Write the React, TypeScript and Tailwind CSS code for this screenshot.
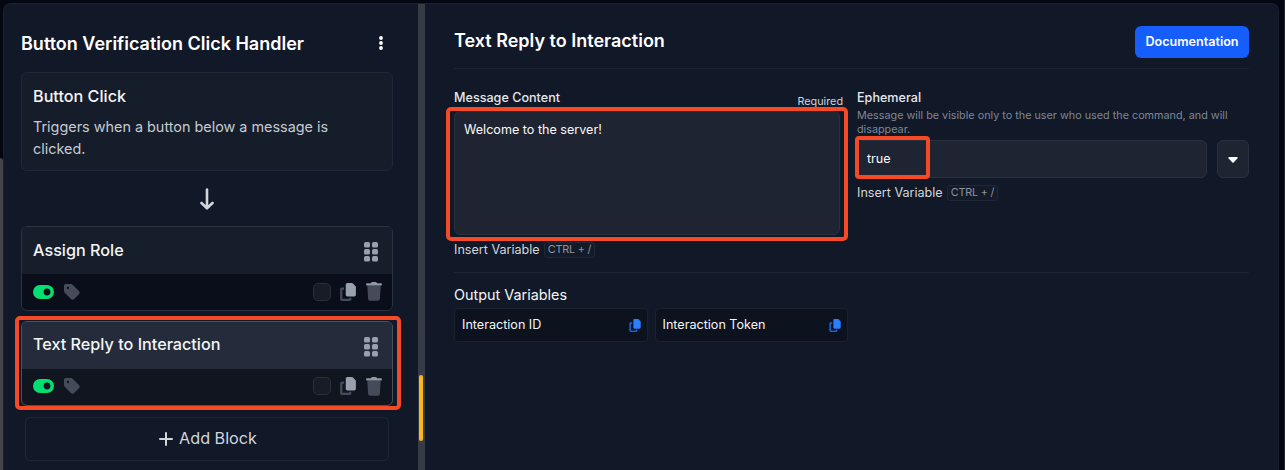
import type { ReactNode } from "react";

function CopyIcon({ className, back, front }: { className: string; back: string; front: string }) {
  return (
    <svg viewBox="0 0 448 512" className={className}>
      <path
        className={back}
        d="M0 176c0-27 21-48 48-48h64v64H64v256h192v-32h64v48c0 27-21 48-48 48H48c-27 0-48-21-48-48z"
      />
      <path
        className={front}
        d="M160 48c0-27 21-48 48-48h124c13 0 25 5 34 14l68 68c9 9 14 21 14 34v220c0 27-21 48-48 48H208c-27 0-48-21-48-48z"
      />
    </svg>
  );
}

function ToggleIcon() {
  return (
    <svg viewBox="0 0 21 14" className="h-[14px] w-[21px]">
      <path
        fillRule="evenodd"
        className="fill-[#05df72]"
        d="M7 0h7a7 7 0 0 1 0 14H7A7 7 0 0 1 7 0zM14 3.6a3.4 3.4 0 1 0 0 6.8a3.4 3.4 0 0 0 0-6.8z"
      />
    </svg>
  );
}

function TagIcon() {
  return (
    <svg viewBox="0 0 448 448" className="ml-2.5 size-4">
      <path
        fillRule="evenodd"
        className="fill-[#454b58]"
        d="M0 48v150c0 17 7 33 19 45l176 176c25 25 66 25 91 0l133-133c25-25 25-66 0-91L243 19C231 7 215 0 198 0H48C21 0 0 21 0 48zm112 32a32 32 0 1 1 0 64a32 32 0 1 1 0-64z"
      />
    </svg>
  );
}

function TrashIcon() {
  return (
    <svg viewBox="0 0 16 19" className="ml-[10px] h-[19px] w-4">
      <path className="fill-[#454b58]" d="M1.300 3.500h13.400l-.8 13.400a2 2 0 0 1-2 1.800H4.100a2 2 0 0 1-2-1.800z" />
      <path
        className="fill-[#8f98a5]"
        d="M5.300.6A1.200 1.200 0 0 1 6.400 0h3.200c.5 0 .9.200 1.100.6l.3.700h3.900a1.100 1.100 0 0 1 0 2.200H1.100a1.100 1.100 0 0 1 0-2.200H5z"
      />
    </svg>
  );
}

function GripIcon() {
  return (
    <svg viewBox="0 0 14 20" className="h-5 w-[14px] fill-[#99a1af]">
      {[0, 7, 14].map((y) =>
        [0, 8].map((x) => <rect key={`${x}-${y}`} x={x} y={y} width="6" height="5.600" rx="1.700" />),
      )}
    </svg>
  );
}

function Block({ title, selected }: { title: string; selected?: boolean }) {
  return (
    <div
      className={`flex h-[85px] flex-col overflow-hidden rounded-md border ${
        selected ? "border-[#4a5260] bg-[#101520]" : "border-[#2b3340] bg-[#090e1a]"
      }`}
    >
      <div
        className={`flex h-[47px] items-center justify-between pr-[14px] pb-px pl-[11px] ${
          selected ? "bg-[#242c3b]" : "bg-[#161e2b]"
        }`}
      >
        <span className="text-[16.2px] font-medium text-[#f3f4f6]">{title}</span>
        <span className="mt-1">
          <GripIcon />
        </span>
      </div>
      <div className="flex flex-1 items-center pr-[10px] pb-px pl-[10.500px]">
        <ToggleIcon />
        <TagIcon />
        <span className="ml-auto size-[18px] rounded-[5px] border border-[#2a303b] bg-[#171c27]" />
        <CopyIcon className="ml-[9px] h-[18px] w-4" back="fill-[#454b58]" front="fill-[#99a1af]" />
        <TrashIcon />
      </div>
    </div>
  );
}

function InsertVariable() {
  return (
    <div className="flex h-4 items-center text-[12.6px] text-[#d1d5dc]">
      Insert Variable
      <span className="ml-1 flex h-4 items-center rounded-[3px] border border-[#1f2836] bg-[#131b28] px-[3px] text-[10.8px] tracking-[-0.2px] text-[#8b93a1]">
        CTRL + /
      </span>
    </div>
  );
}

function OutputVariable({ children }: { children: ReactNode }) {
  return (
    <div className="flex h-[34px] w-[193.500px] items-center justify-between rounded-[4px] border border-[#1a2230] bg-[#0c121e] pr-1.5 pl-[7px] text-[12.6px] text-[#f3f4f6]">
      <span className="pt-px">{children}</span>
      <CopyIcon className="h-[13px] w-3" back="fill-[#1d5fd0]" front="fill-[#2b7fff]" />
    </div>
  );
}

function Sidebar() {
  return (
    <aside className="flex w-[414px] shrink-0 flex-col pr-[25px] pl-[17px]">
      <header className="mt-[27px] flex h-6 items-center justify-between pr-[10px]">
        <h1 className="text-[18px] font-semibold text-white">Button Verification Click Handler</h1>
        <svg viewBox="0 0 4 14" className="mb-px h-[14px] w-1 fill-white">
          <circle cx="2" cy="2" r="1.900" />
          <circle cx="2" cy="7" r="1.900" />
          <circle cx="2" cy="12" r="1.900" />
        </svg>
      </header>
      <section className="mt-[17px] h-[99px] rounded-md border border-[#1e2836] bg-[#151d2a] px-[11px] pt-[11px]">
        <h2 className="text-[16.2px] leading-6 font-medium text-[#f3f4f6]">Button Click</h2>
        <p className="mt-2 text-[14.4px] leading-[22px] text-[#c5cad1]">
          Triggers when a button below a message is clicked.
        </p>
      </section>
      <div className="flex h-[55px] items-center justify-center">
        <svg
          viewBox="0 0 14 22"
          className="h-[22px] w-[14px] fill-none stroke-[#d1d5dc] stroke-[2.600]"
          strokeLinecap="round"
          strokeLinejoin="round"
        >
          <path d="M7 1.500v18.500M1.500 15l5.500 5.300l5.500-5.300" />
        </svg>
      </div>
      <div className="flex flex-col gap-[9.500px]">
        <Block title="Assign Role" />
        <Block title="Text Reply to Interaction" selected />
      </div>
      <button className="mx-1 mt-[11.500px] flex h-11 shrink-0 items-center justify-center gap-1.5 rounded-[5px] border border-[#1f2735] pb-px pl-0.5 text-[16.2px] text-[#d1d5dc]">
        <svg viewBox="0 0 14 14" className="size-[14px] fill-none stroke-[#d1d5dc] stroke-2" strokeLinecap="round">
          <path d="M7 1v12M1 7h12" />
        </svg>
        Add Block
      </button>
    </aside>
  );
}

function Editor() {
  return (
    <main className="flex min-w-0 flex-1 flex-col pr-[29px] pl-[29px]">
      <header className="flex h-[65px] items-center justify-between border-b border-[#1c2431] pb-0">
        <h2 className="mb-px pt-[9px] text-[18px] font-semibold text-white">Text Reply to Interaction</h2>
        <button className="mt-[11px] h-8 w-[114px] rounded-md bg-[#155dfc] pt-px text-[12.6px] font-semibold text-white">
          Documentation
        </button>
      </header>
      <div className="mt-[19px] flex h-[185px] gap-[14px] border-b border-[#1c2431]">
        <section className="w-[389px]">
          <div className="flex h-[23px] justify-between">
            <label className="pt-px text-[12.6px] leading-[18px] font-medium text-[#e5e7eb]">Message Content</label>
            <span className="pt-[5px] text-[10.8px] leading-[18px] text-[#d1d5dc]">Required</span>
          </div>
          <div className="h-[124px] w-[386px] rounded-md border border-[#29313e] bg-[#1e2431] px-[9px] pt-2 text-[12.6px] leading-5 text-[#f9fafb]">
            Welcome to the server!
          </div>
          <div className="mt-[7px]">
            <InsertVariable />
          </div>
        </section>
        <section className="min-w-0 flex-1">
          <label className="block pt-px text-[12.6px] leading-[18px] font-medium text-[#e5e7eb]">Ephemeral</label>
          <p className="mt-[2px] text-[10.8px] leading-[14px] text-[#7f8796]">
            Message will be visible only to the user who used the command, and will disappear.
          </p>
          <div className="mt-[3px] flex h-[38px] gap-[10px]">
            <div className="flex flex-1 items-center rounded-md border border-[#29313e] bg-[#1e2431] px-[9px] text-[12.6px] text-[#f9fafb]">
              true
            </div>
            <button className="flex w-8 items-center justify-center rounded-md border border-[#29313e] bg-[#1e2431]">
              <svg viewBox="0 0 10 6" className="mt-px h-1.5 w-[10px] fill-white">
                <path d="M1 0h8a.8.8 0 0 1 .6 1.300L5.600 5.500a.8.8 0 0 1-1.200 0L.4 1.300A.8.8 0 0 1 1 0z" />
              </svg>
            </button>
          </div>
          <div className="mt-[7px]">
            <InsertVariable />
          </div>
        </section>
      </div>
      <h3 className="mt-3 text-[14.4px] leading-5 font-normal text-[#f3f4f6]">Output Variables</h3>
      <div className="mt-[3px] flex gap-[7px]">
        <OutputVariable>Interaction ID</OutputVariable>
        <OutputVariable>Interaction Token</OutputVariable>
      </div>
    </main>
  );
}

export default function App() {
  return (
    <div className="relative flex h-[470px] w-[1285px] overflow-hidden bg-[#030712] font-['Inter',sans-serif]">
      <div className="w-[3px] shrink-0 pt-[158px]">
        <div className="h-full rounded-tr-sm bg-[#424447]" />
      </div>
      <div className="mt-[3px] flex w-[1276px] shrink-0 rounded-t-lg border border-b-0 border-[#1a212e] bg-[#111827]">
        <Sidebar />
        <div className="relative w-[7px] shrink-0 bg-[#363b48]">
          <div className="absolute top-[371px] left-px h-[66px] w-1 rounded-full bg-[#fcb71e]" />
        </div>
        <Editor />
      </div>
      <div className="ml-auto w-px bg-[#24272e]" />

      <div className="absolute top-[316px] left-[15px] h-[94px] w-[386px] rounded-[5px] border-4 border-[#f54a25]" />
      <div className="absolute top-[107px] left-[446px] h-[134px] w-[402px] rounded-[5px] border-4 border-[#f54a25]" />
      <div className="absolute top-[136px] left-[855px] h-[43px] w-[75px] rounded-[4px] border-4 border-[#f54a25]" />
    </div>
  );
}
